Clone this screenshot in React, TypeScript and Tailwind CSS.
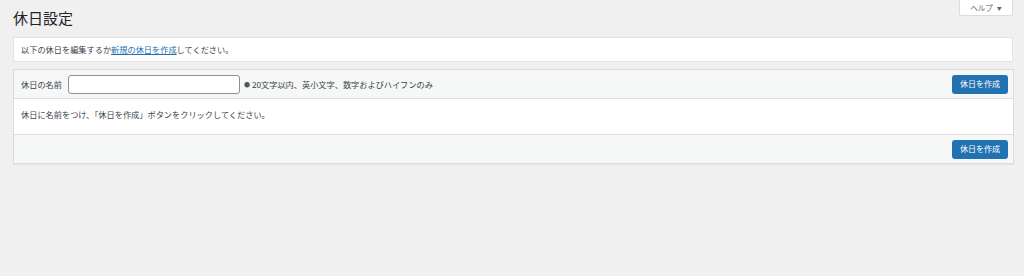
export default function App() {
  const font = { fontFamily: '"Noto Sans CJK JP", "Noto Sans", sans-serif' };
  return (
    <div className="w-[1024px] h-[276px] bg-[#f0f0f1] text-[#3c434a] relative overflow-hidden" style={font}>
      <div className="absolute right-[11px] top-0 w-[54px] h-[16px] bg-white border border-[#dcdcde] border-t-0 rounded-b-[3px] flex items-center justify-center text-[7.5px] text-[#646970] gap-[4px]">
        <span>ヘルプ</span>
        <span className="text-[5px]">▼</span>
      </div>
      <div className="pl-[13px] pr-[10px] pt-[7px]">
        <h1 className="text-[15px] leading-[22px] text-[#1d2327] font-normal">休日設定</h1>
        <div className="mt-[8px] w-[1000px] h-[25px] bg-white border border-[#e4e4e7] flex items-center px-[7px] text-[8.2px]">
          <span>以下の休日を編集するか</span>
          <span className="text-[#2271b1] underline">新規の休日を作成</span>
          <span>してください。</span>
        </div>
        <div className="mt-[7px] w-[1001px] border border-[#dcdcde] shadow-[0_1px_1px_rgba(0,0,0,0.04)]">
          <div className="h-[29px] bg-[#f6f7f7] border-b border-[#dcdcde] flex items-center pl-[7px] pr-[5px] text-[8.2px]">
            <span>休日の名前</span>
            <div className="ml-[6px] w-[172px] h-[19px] bg-white border border-[#8c8f94] rounded-[3px]" />
            <span className="ml-[4px] text-[6px] text-[#50575e]">●</span>
            <span className="ml-[2px]">20文字以内、英小文字、数字およびハイフンのみ</span>
            <div className="ml-auto w-[56px] h-[19px] bg-[#2271b1] rounded-[3px] text-white text-[8px] flex items-center justify-center">休日を作成</div>
          </div>
          <div className="h-[36px] bg-white border-b border-[#dcdcde] px-[7px] pt-[9px] text-[8.2px]">
            休日に名前をつけ、「休日を作成」ボタンをクリックしてください。
          </div>
          <div className="h-[28px] bg-[#f6f7f7] flex items-center justify-end pr-[5px]">
            <div className="w-[56px] h-[19px] bg-[#2271b1] rounded-[3px] text-white text-[8px] flex items-center justify-center">休日を作成</div>
          </div>
        </div>
      </div>
    </div>
  );
}
